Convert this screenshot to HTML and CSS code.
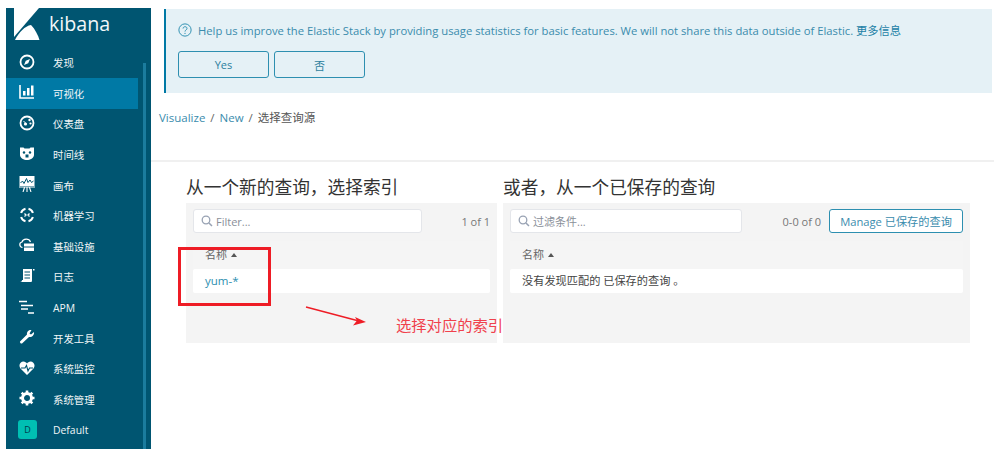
FILE: index.html
```html
<!DOCTYPE html>
<html>
<head>
  <link rel="stylesheet" href="styles.css">
</head>
<body>
  <div class="page">
    <div class="sidebar">
      <div class="logo">
        <svg width="26" height="33" viewBox="0 0 26 33"><path d="M0 0H25L0 29Z" fill="#fff"/><path d="M1 32C5 24 11 18 17 17C21 21 24 27 25.500 32Z" fill="#fff"/></svg>
        <span class="logo-text">kibana</span>
      </div>
      <div class="nav-wrap">
        <ul class="nav">
          <li class="nav-item">
            <svg class="nav-icon" viewBox="0 0 16 16"><circle cx="8" cy="8" r="6.5" fill="none" stroke="#fff" stroke-width="1.8"/><path d="M11 5L9.2 9.2L5 11L6.8 6.8Z" fill="#fff"/></svg>
            <span>发现</span>
          </li>
          <li class="nav-item active">
            <svg class="nav-icon" viewBox="0 0 16 16"><path d="M1 1V14H15" fill="none" stroke="#fff" stroke-width="1.6"/><path d="M4 7H6.500V11.500H4ZM8 4H10.500V11.500H8ZM12 1.500H14.500V11.500H12Z" fill="#fff"/></svg>
            <span>可视化</span>
          </li>
          <li class="nav-item">
            <svg class="nav-icon" viewBox="0 0 16 16"><circle cx="8" cy="8" r="6.500" fill="none" stroke="#fff" stroke-width="1.800"/><circle cx="10.500" cy="5" r="1.200" fill="#fff"/><circle cx="11.500" cy="8.500" r="1.100" fill="#fff"/><circle cx="6.500" cy="9" r="1.600" fill="#fff"/><path d="M4.500 6L7 8.500" stroke="#fff"/></svg>
            <span>仪表盘</span>
          </li>
          <li class="nav-item">
            <svg class="nav-icon" viewBox="0 0 16 16"><path d="M1 1.500H4.500L5.500 2.500H10.500L11.500 1.500H15V9C15 12 11 14 8 14C5 14 1 12 1 9Z" fill="#fff"/><circle cx="5" cy="6.500" r="1.200" fill="#005571"/><circle cx="11" cy="6.500" r="1.200" fill="#005571"/><path d="M6.500 8.500H9.500V11.500H6.500Z" fill="#005571"/></svg>
            <span>时间线</span>
          </li>
          <li class="nav-item">
            <svg class="nav-icon" viewBox="0 0 16 16"><rect x="0.500" y="0" width="15" height="10" fill="#fff"/><path d="M1.500 7L3.500 5L5 7.500L7.500 2.500L9 6.500L11 4L12.500 6.500L14.500 5" fill="none" stroke="#005571" stroke-width="1"/><path d="M0 11H16M4 16L5.500 11.500M8 16V11.500M12 16L10.500 11.500" stroke="#fff" stroke-width="1.100" fill="none"/></svg>
            <span>画布</span>
          </li>
          <li class="nav-item">
            <svg class="nav-icon" viewBox="0 0 16 16"><path d="M6.500 1.800A6.300 6.300 0 0 0 2.100 6M9.500 1.800A6.300 6.300 0 0 1 13.900 6M2.100 10A6.300 6.300 0 0 0 6.500 14.200M13.900 10A6.300 6.300 0 0 1 9.500 14.200" fill="none" stroke="#fff" stroke-width="2"/><path d="M5.500 6.500L7 8L5.500 9.500M10.500 6.500L9 8L10.500 9.500" fill="none" stroke="#fff" stroke-width="1.300"/></svg>
            <span>机器学习</span>
          </li>
          <li class="nav-item">
            <svg class="nav-icon" viewBox="0 0 16 16"><path d="M3.500 10.500C0 10 0 5.500 3 5C4 1.500 10 1 11.500 5" fill="none" stroke="#fff" stroke-width="1.200"/><path d="M5 6.500H15V9.500H5ZM5 10.500H15V14H5Z" fill="#fff"/></svg>
            <span>基础设施</span>
          </li>
          <li class="nav-item">
            <svg class="nav-icon" viewBox="0 0 16 16"><path d="M4 1H13V12C13 13 13 14 12 14H1C2.500 14 3 13 3 12H4Z" fill="#fff"/><path d="M5.500 4H11M5.500 7H11M5.500 10H11" stroke="#005571" stroke-width="1.100"/><rect x="14" y="1" width="1.500" height="1.500" fill="#fff"/></svg>
            <span>日志</span>
          </li>
          <li class="nav-item">
            <svg class="nav-icon" viewBox="0 0 16 16"><path d="M0 2.500H8M2 6.500H14M2 10H9M9 14H15" stroke="#fff" stroke-width="1.600"/></svg>
            <span>APM</span>
          </li>
          <li class="nav-item">
            <svg class="nav-icon" viewBox="0 0 16 16"><path d="M15 3L12 5.500L10.500 4.500L12.500 1C10 0.500 7.500 2.500 8 5.500L1 12.500C0.500 13.500 2 15 3 14.500L10 8C13 8.500 15.500 6 15 3Z" fill="#fff"/></svg>
            <span>开发工具</span>
          </li>
          <li class="nav-item">
            <svg class="nav-icon" viewBox="0 0 16 16"><path d="M8 15L1.500 8.500C-1 5 1.500 1.500 4.500 1.500C6 1.500 7.300 2.500 8 3.500C8.700 2.500 10 1.500 11.500 1.500C14.500 1.500 17 5 14.500 8.500Z" fill="#fff"/><path d="M2 8H6L7.500 5.500L9 11L10.500 8H14" fill="none" stroke="#005571" stroke-width="1.100"/></svg>
            <span>系统监控</span>
          </li>
          <li class="nav-item">
            <svg class="nav-icon" viewBox="0 0 16 16"><circle cx="8" cy="8" r="4.500" fill="none" stroke="#fff" stroke-width="3"/><path d="M8 0.500V3.500M8 12.500V15.500M0.500 8H3.500M12.500 8H15.500M2.700 2.700L4.800 4.800M11.200 11.200L13.300 13.300M13.300 2.700L11.200 4.800M4.800 11.200L2.700 13.300" stroke="#fff" stroke-width="2.600"/></svg>
            <span>系统管理</span>
          </li>
          <li class="nav-item">
            <span class="avatar">D</span>
            <span>Default</span>
          </li>
        </ul>
        <div class="scroll-line"></div>
      </div>
    </div>

    <div class="main">
      <div class="callout">
        <div class="callout-title">
          <svg class="help-icon" viewBox="0 0 16 16"><circle cx="8" cy="8" r="7" fill="none" stroke="#2d8fb0" stroke-width="1.100"/><path d="M5.800 6.300C5.800 3.600 10.300 3.600 10.300 6.200C10.300 8 8 7.900 8 9.800" fill="none" stroke="#2d8fb0" stroke-width="1.100"/><circle cx="8" cy="11.800" r="0.800" fill="#2d8fb0"/></svg>
          <span>Help us improve the Elastic Stack by providing usage statistics for basic features. We will not share this data outside of Elastic. <a class="more">更多信息</a></span>
        </div>
        <div class="callout-actions">
          <button class="btn">Yes</button>
          <button class="btn">否</button>
        </div>
      </div>

      <div class="crumbs">
        <a>Visualize</a><span class="sep">/</span><a>New</a><span class="sep">/</span><span class="crumb-last">选择查询源</span>
      </div>

      <div class="content">
        <div class="col col-left">
          <h2 class="col-title">从一个新的查询，选择索引</h2>
          <div class="panel">
            <div class="toolbar">
              <div class="search">
                <svg class="search-icon" viewBox="0 0 12 12"><circle cx="5" cy="5" r="3.800" fill="none" stroke="#98a2b3" stroke-width="1.300"/><path d="M8 8L11 11" stroke="#98a2b3" stroke-width="1.500"/></svg>
                <span>Filter...</span>
              </div>
              <span class="count">1 of 1</span>
            </div>
            <div class="table-head">名称 <i class="sort-up"></i></div>
            <div class="table-row"><a>yum-*</a></div>
          </div>
        </div>
        <div class="col col-right">
          <h2 class="col-title">或者，从一个已保存的查询</h2>
          <div class="panel">
            <div class="toolbar">
              <div class="search">
                <svg class="search-icon" viewBox="0 0 12 12"><circle cx="5" cy="5" r="3.800" fill="none" stroke="#98a2b3" stroke-width="1.300"/><path d="M8 8L11 11" stroke="#98a2b3" stroke-width="1.500"/></svg>
                <span>过滤条件...</span>
              </div>
              <span class="count">0-0 of 0</span>
              <button class="btn-manage">Manage 已保存的查询</button>
            </div>
            <div class="table-head">名称 <i class="sort-up"></i></div>
            <div class="table-row">没有发现匹配的 已保存的查询 。</div>
          </div>
        </div>
      </div>
    </div>
  </div>

  <!-- annotations drawn on top of the screenshot -->
  <div class="mark-box"></div>
  <svg class="mark-arrow" width="64" height="22" viewBox="0 0 64 22"><path d="M1 1L52 14.500" stroke="#ee1c25" stroke-width="1.400"/><path d="M61 16L48 19.500L52 14.500L50 11Z" fill="#ee1c25"/></svg>
  <div class="mark-text">选择对应的索引</div>
</body>
</html>
```

FILE: styles.css
```css
body {
  margin: 0;
  background: #FFFFFF;
  font-family: "Open Sans", "Noto Sans CJK SC", sans-serif;
  font-size: 12px;
  color: #3F3F3F;
}

.page {
  display: flex;
  align-items: flex-start;
  padding-top: 8px;
  padding-left: 6px;
}

/* sidebar */
.sidebar {
  width: 145px;
  height: 441px;
  flex-shrink: 0;
  background: #005571;
  color: #FFFFFF;
  overflow: hidden;
}

.logo {
  display: flex;
  height: 33px;
  padding-left: 8px;
}

.logo-text {
  margin-left: 9px;
  font-size: 19.7px;
  line-height: 32px;
  color: #F2F7F9;
}

.nav-wrap {
  display: flex;
  padding-top: 6.5px;
}

.nav {
  list-style: none;
  margin: 0;
  padding: 0;
  width: 132px;
}

.nav-item {
  display: flex;
  align-items: center;
  height: 30.6px;
  font-size: 10.4px;
  color: #F0F5F7;
}

.nav-item.active {
  background: #0079A5;
}

.nav-icon {
  width: 16px;
  height: 16px;
  margin-left: 13px;
  margin-right: 18px;
  margin-bottom: 2px;
  flex-shrink: 0;
}

.avatar {
  width: 19px;
  height: 19px;
  margin-left: 12px;
  margin-right: 16px;
  border-radius: 3px;
  background: #00BFB3;
  color: #003B4D;
  font-size: 9px;
  line-height: 19px;
  text-align: center;
}

.scroll-line {
  width: 3px;
  height: 386px;
  margin-top: 15px;
  margin-left: 5px;
  background: #1B7C9E;
}

/* main */
.main {
  flex: 1;
  min-width: 0;
  padding-top: 1px;
}

.callout {
  height: 84px;
  box-sizing: border-box;
  margin-left: 13px;
  margin-right: 2px;
  padding: 13px 12px 0;
  border-left: 2px solid #0079A5;
  background: #E5F1F6;
  color: #3A8CAD;
  font-size: 11.25px;
}

.callout-title {
  display: flex;
  align-items: center;
  height: 16px;
}

.help-icon {
  width: 14px;
  height: 14px;
  margin-right: 6px;
}

.more {
  color: #1C81A6;
}

.callout-actions {
  display: flex;
  gap: 5px;
  margin-top: 13px;
}

.btn {
  width: 91px;
  height: 27px;
  padding: 0;
  border: 1px solid #2D8FB0;
  border-radius: 3px;
  background: transparent;
  color: #2D7F9E;
  font-family: inherit;
  font-size: 11px;
}

.crumbs {
  height: 67px;
  box-sizing: border-box;
  margin-left: 8px;
  padding-top: 17px;
  font-size: 11.5px;
  line-height: 15px;
  color: #3A8CAD;
}

.sep {
  margin: 0 5px;
  color: #666666;
}

.crumb-last {
  color: #555555;
}

.content {
  display: flex;
  gap: 6px;
  border-top: 2px solid #F0F0F0;
  padding-left: 35px;
}

.col-left {
  width: 311px;
}

.col-right {
  width: 467px;
}

.col-title {
  margin: 13px 0 0;
  height: 28px;
  font-size: 17.7px;
  font-weight: 400;
  line-height: 24px;
  color: #333333;
}

.panel {
  height: 140px;
  box-sizing: border-box;
  padding: 6px 7px 0;
  background: #F4F4F4;
}

.toolbar {
  display: flex;
  align-items: center;
  height: 24px;
}

.search {
  display: flex;
  align-items: center;
  width: 229px;
  height: 24px;
  box-sizing: border-box;
  padding-left: 7px;
  border: 1px solid #E4E6EA;
  border-radius: 3px;
  background: #FFFFFF;
  font-size: 11px;
  color: #8A8F99;
}

.col-right .search {
  width: 232px;
}

.search-icon {
  width: 12px;
  height: 12px;
  margin-right: 3px;
}

.count {
  margin-left: auto;
  font-size: 11px;
  color: #777777;
}

.btn-manage {
  width: 134px;
  height: 24px;
  margin-left: 8px;
  padding: 0;
  border: 1px solid #2D8FB0;
  border-radius: 3px;
  background: #FFFFFF;
  color: #3A8CAD;
  font-family: inherit;
  font-size: 11.2px;
}

.table-head {
  height: 28px;
  margin-top: 8px;
  padding-left: 12px;
  background: #F5F5F5;
  font-size: 11px;
  line-height: 28px;
  color: #666666;
}

.sort-up {
  display: inline-block;
  margin-left: 1px;
  vertical-align: 2px;
  border-left: 3.5px solid transparent;
  border-right: 3.5px solid transparent;
  border-bottom: 4px solid #555555;
}

.table-row {
  height: 24px;
  padding-left: 12px;
  border-radius: 2px;
  background: #FFFFFF;
  font-size: 11.2px;
  line-height: 24px;
  color: #444444;
}

.table-row a {
  font-size: 11.5px;
  color: #2D8FB0;
}

/* red annotations over the page */
.mark-box {
  position: absolute;
  left: 178px;
  top: 247px;
  width: 87px;
  height: 53px;
  border: 3px solid #EE1C25;
}

.mark-arrow {
  position: absolute;
  left: 305px;
  top: 306px;
}

.mark-text {
  position: absolute;
  left: 396px;
  top: 315px;
  font-size: 15.3px;
  line-height: 20px;
  color: #F0414C;
  white-space: nowrap;
}
```
